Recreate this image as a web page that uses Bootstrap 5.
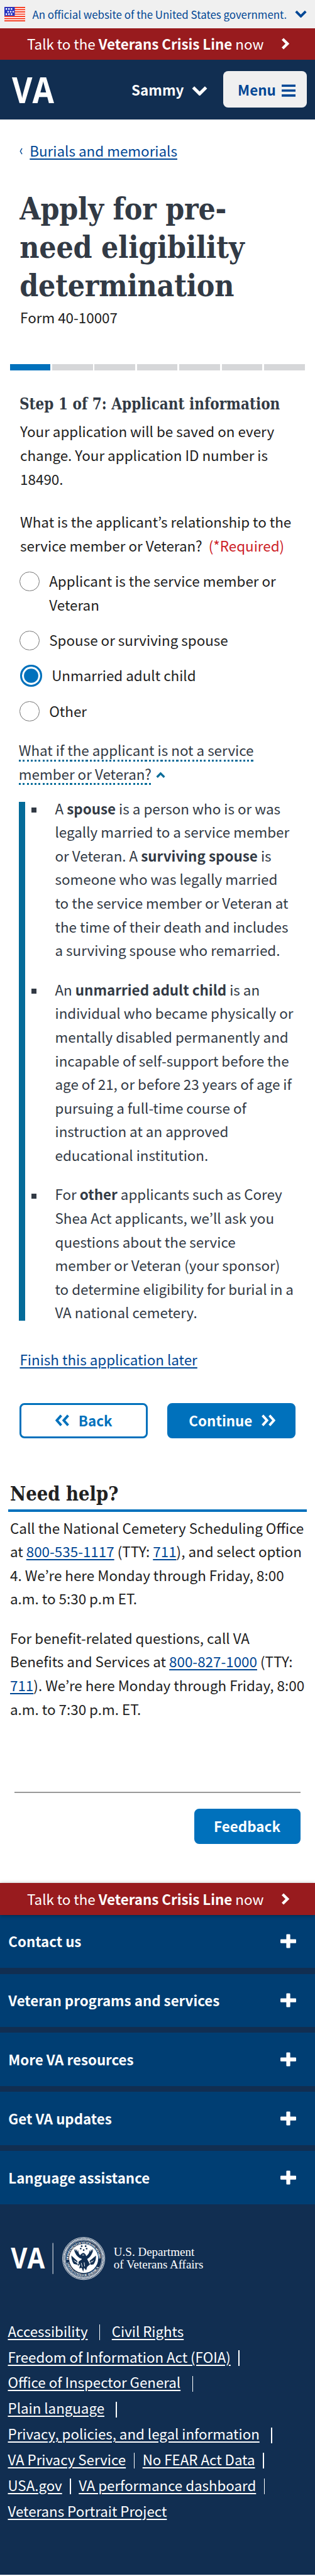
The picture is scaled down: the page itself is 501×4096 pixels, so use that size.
<!DOCTYPE html>
<html lang="en">
<head>
<meta charset="utf-8">
<meta name="viewport" content="width=device-width, initial-scale=1">
<title>Apply for pre-need eligibility determination</title>
<link href="https://cdn.jsdelivr.net/npm/bootstrap@5.3.0/dist/css/bootstrap.min.css" rel="stylesheet">
<style>
:root{--u:.78281px;--s:"Noto Sans CJK KR","Open Sans",sans-serif;--b:"DejaVu Serif Condensed","DejaVu Serif",serif}
body{font-family:var(--s);font-size:calc(28.65*var(--u));line-height:calc(48*var(--u));color:#212121;background:#fff;white-space:nowrap;overflow-x:hidden;width:501px}
p,h1,h2,h3,ul{margin:0}
svg{display:block;flex:none}
a{color:#004795;text-underline-offset:calc(3.5*var(--u));text-decoration-thickness:calc(2*var(--u))}
.gov{height:calc(57*var(--u));background:#f0f0f0;color:#004795;font-size:calc(21.55*var(--u));padding:0 calc(16*var(--u)) 0 calc(9.5*var(--u))}
.crisis{height:calc(64*var(--u));background:#981b1e;color:#fff;padding:0 calc(52*var(--u)) 0 calc(55*var(--u));letter-spacing:-.002em}
.navy{background:#112e51;color:#fff}
.mast{height:calc(122*var(--u));padding:0 calc(16*var(--u)) 0 calc(24*var(--u))}
.menu{width:calc(170*var(--u));height:calc(74*var(--u));background:#f0f0f0;color:#004795;border-radius:calc(10*var(--u));padding:0 calc(24*var(--u)) 0 calc(29*var(--u));margin-left:calc(32*var(--u))}
.crumb{padding:calc(39.5*var(--u)) 0 0 calc(40*var(--u))}
.slab{font-family:var(--b);font-stretch:condensed;font-weight:700;color:#323a45;transform-origin:0 0}
h1.slab{font-size:calc(61*var(--u));line-height:calc(78*var(--u));margin:calc(55.5*var(--u)) 0 0 calc(40*var(--u));letter-spacing:-.005em}
.form-no{padding:calc(.5*var(--u)) 0 0 calc(41*var(--u))}
.steps{margin:calc(71.5*var(--u)) calc(21*var(--u)) 0 calc(20*var(--u));height:calc(12*var(--u));gap:calc(3.6*var(--u))}
.steps div{background:#d6d7d9}
.steps div:first-child{background:#0071bc}
h2.slab{font-size:calc(33*var(--u));line-height:calc(48*var(--u));margin:calc(45.5*var(--u)) 0 0 calc(39*var(--u));transform:scaleX(.93)}
.indent{padding-left:calc(41*var(--u))}
.opt{padding-left:calc(40*var(--u));gap:calc(20*var(--u));margin-top:calc(24*var(--u))}
.ring{width:calc(40*var(--u));height:calc(40*var(--u));border:calc(2*var(--u)) solid #757575;border-radius:50%;margin-top:calc(4.5*var(--u));flex:none}
.ring.on{width:calc(44*var(--u));height:calc(44*var(--u));border:calc(4*var(--u)) solid #0071bc;background:#0071bc;box-shadow:inset 0 0 0 calc(4*var(--u)) #fff;margin:calc(2.5*var(--u)) 0 0 calc(1*var(--u))}
.more{color:#323a45;padding-left:calc(38*var(--u));margin-top:calc(31.5*var(--u))}
.more span{display:inline-block;height:calc(47*var(--u));vertical-align:top;background:repeating-linear-gradient(90deg,#046b99 0 3.13px,transparent 3.13px 6.262px) 0 100%/100% 3px no-repeat}
.more div{height:calc(48*var(--u))}
.info{border-left:calc(14*var(--u)) solid #046b99;margin:calc(33*var(--u)) 0 0 calc(38*var(--u));height:calc(1054*var(--u));color:#323a45;padding:0}
.info li{position:relative;list-style:none;margin:0 0 calc(32*var(--u));padding:0 0 0 calc(61*var(--u));top:calc(-10.5*var(--u))}
.info li::before{content:"";position:absolute;left:calc(13*var(--u));top:calc(22.5*var(--u));width:calc(10*var(--u));height:calc(10*var(--u));background:#323a45}
.act{width:calc(260*var(--u));height:calc(72*var(--u));padding:0;border:calc(4*var(--u)) solid #0071bc;border-radius:calc(10*var(--u));font:inherit;font-weight:700;color:#0071bc}
.act.full{background:#0071bc;color:#fff}
.help{margin:calc(91.4*var(--u)) calc(17*var(--u)) 0;border-bottom:calc(6*var(--u)) solid #0071bc}
.help h2.slab{font-size:calc(40.5*var(--u));line-height:calc(42*var(--u));margin:0 0 0 calc(4*var(--u));color:#212121;height:calc(53*var(--u));transform:scaleX(.965)}
.rule{margin:calc(143.5*var(--u)) calc(30*var(--u)) 0;height:2px;background:#999}
.shade{box-shadow:0 1px 6px rgba(0,0,0,.35);position:relative}
.acc{height:calc(108*var(--u));background:#003e73;margin-bottom:calc(12*var(--u));padding:0 calc(38*var(--u)) 0 calc(17*var(--u));font-weight:700;font-size:calc(28.5*var(--u))}
.foot a{color:#fff}
.foot{padding-left:calc(16*var(--u));font-size:calc(28.5*var(--u));line-height:calc(52.2*var(--u));height:calc(522*var(--u))}
.foot i{display:inline-block;width:1.5px;height:calc(32*var(--u));background:#fff;vertical-align:calc(-7*var(--u));margin:0 calc(16*var(--u))}
.foot .w{margin:0 calc(23.5*var(--u))}
</style>
</head>
<body>
<svg width="0" height="0" class="position-absolute">
  <symbol id="right" viewBox="0 0 16 24"><path d="M3 2.5 12.5 12 3 21.5" fill="none" stroke="currentColor" stroke-width="5.5"/></symbol>
  <symbol id="down" viewBox="0 0 32 20"><path d="M3 3.5 16 16.5 29 3.5" fill="none" stroke="currentColor" stroke-width="6.5"/></symbol>
  <symbol id="dbl" viewBox="0 0 28 24"><path d="M2 2 11 12 2 22M16 2 25 12 16 22" fill="none" stroke="currentColor" stroke-width="5"/></symbol>
  <symbol id="plus" viewBox="0 0 32 32"><path d="M13.500 3.500h5v10h12v5h-12v10h-5v-10h-12v-5h12z" fill="#fff" stroke="#fff" stroke-width="3" stroke-linejoin="round"/></symbol>
</svg>

<div class="gov d-flex align-items-center">
  <svg width="33" height="23" viewBox="0 0 42 29"><path fill="#fff" d="M0 0h42v29H0z"/><path d="M0 1h42M0 5.500h42M0 10h42M0 14.500h42M0 19h42M0 23.500h42M0 28h42" stroke="#f52a0c" stroke-width="2.200"/><path fill="#2434c2" d="M0 0h21v18H0z"/><path d="M2.500 4h14M6 9.500h14M2.500 14.500h14" stroke="#fff" stroke-width="3" stroke-dasharray="3 2.200"/></svg>
  <span style="margin-left:11px">An official website of the United States government.</span>
  <svg class="ms-auto" width="19" height="12"><use href="#down"/></svg>
</div>
<div class="crisis d-flex align-items-center justify-content-between"><span>Talk to the <b>Veterans Crisis Line</b> now</span><svg width="13" height="19"><use href="#right"/></svg></div>
<header class="navy mast d-flex align-items-center">
  <svg width="67" height="41" viewBox="0 0 85 52" overflow="visible" style="margin-top:2px"><text x="0" y="52" font-family="Open Sans" font-weight="700" font-size="72.800" textLength="85" lengthAdjust="spacingAndGlyphs" fill="#fff">VA</text></svg>
  <b class="ms-auto">Sammy</b>
  <svg style="margin:4px 0 0 13px" width="25" height="16"><use href="#down"/></svg>
  <div class="menu d-flex align-items-center justify-content-between"><b>Menu</b><svg width="22" height="20" viewBox="0 0 28 25" style="margin-top:3px"><path d="M0 2.500h28M0 12.500h28M0 22.500h28" stroke="#004795" stroke-width="4.500"/></svg></div>
</header>

<main>
  <div class="crumb d-flex align-items-center"><svg width="5" height="11" viewBox="0 0 6 14" style="margin:2px 11px 0 0"><path d="M5 1 1.500 7 5 13" fill="none" stroke="#004795" stroke-width="1.800"/></svg><a href="#">Burials and memorials</a></div>
  <h1 class="slab">Apply for pre-<br>need eligibility<br>determination</h1>
  <p class="form-no">Form 40-10007</p>
  <div class="steps d-flex"><div class="flex-fill"></div><div class="flex-fill"></div><div class="flex-fill"></div><div class="flex-fill"></div><div class="flex-fill"></div><div class="flex-fill"></div><div class="flex-fill"></div></div>
  <h2 class="slab">Step 1 of 7: Applicant information</h2>
  <p class="indent" style="margin-top:5.600px">Your application will be saved on every<br>change. Your application ID number is<br>18490.</p>
  <p class="indent" style="margin-top:31px">What is the applicant’s relationship to the<br>service member or Veteran?&nbsp; <span style="color:#cd2026">(*Required)</span></p>
  <div class="opt d-flex"><span class="ring"></span><span>Applicant is the service member or<br>Veteran</span></div>
  <div class="opt d-flex"><span class="ring"></span><span>Spouse or surviving spouse</span></div>
  <div class="opt d-flex"><span class="ring on"></span><span>Unmarried adult child</span></div>
  <div class="opt d-flex"><span class="ring"></span><span>Other</span></div>
  <div class="more"><div><span>What if the applicant is not a service</span></div><div class="d-flex"><span>member or Veteran?</span><svg width="15" height="10" viewBox="0 0 18 12" style="margin:15px 0 0 7px"><path d="M2 10.500 9 3.500 16 10.500" fill="none" stroke="#046b99" stroke-width="4"/></svg></div></div>
  <ul class="info">
    <li>A <b>spouse</b> is a person who is or was<br>legally married to a service member<br>or Veteran. A <b>surviving spouse</b> is<br>someone who was legally married<br>to the service member or Veteran at<br>the time of their death and includes<br>a surviving spouse who remarried.</li>
    <li>An <b>unmarried adult child</b> is an<br>individual who became physically or<br>mentally disabled permanently and<br>incapable of self-support before the<br>age of 21, or before 23 years of age if<br>pursuing a full-time course of<br>instruction at an approved<br>educational institution.</li>
    <li>For <b>other</b> applicants such as Corey<br>Shea Act applicants, we’ll ask you<br>questions about the service<br>member or Veteran (your sponsor)<br>to determine eligibility for burial in a<br>VA national cemetery.</li>
  </ul>
  <p style="margin:42.600px 0 0 31.500px"><a href="#">Finish this application later</a></p>
  <div class="d-flex" style="margin:50.500px 0 0 31.300px;gap:31.300px">
    <button class="act btn d-flex align-items-center justify-content-center"><svg width="22" height="19" style="transform:scaleX(-1);margin-right:15px"><use href="#dbl"/></svg>Back</button>
    <button class="act full btn d-flex align-items-center justify-content-center"><span style="margin-left:3px">Continue</span><svg width="22" height="19" style="margin-left:15px"><use href="#dbl"/></svg></button>
  </div>
  <div class="help"><h2 class="slab">Need help?</h2></div>
  <p style="margin:6.500px 0 0 16px">Call the National Cemetery Scheduling Office<br>at <a href="#">800-535-1117</a> (TTY: <a href="#">711</a>), and select option<br>4. We’re here Monday through Friday, 8:00<br>a.m. to 5:30 p.m ET.</p>
  <p style="margin:25px 0 0 16px">For benefit-related questions, call VA<br>Benefits and Services at <a href="#">800-827-1000</a> (TTY:<br><a href="#">711</a>). We’re here Monday through Friday, 8:00<br>a.m. to 7:30 p.m. ET.</p>
  <div class="rule"></div>
  <div class="d-flex justify-content-end" style="margin:25px 23.500px 62.600px 0"><button class="act full btn" style="width:169px">Feedback</button></div>
</main>

<footer class="navy">
  <div class="crisis shade d-flex align-items-center justify-content-between"><span>Talk to the <b>Veterans Crisis Line</b> now</span><svg width="13" height="19"><use href="#right"/></svg></div>
  <div class="acc d-flex align-items-center justify-content-between">Contact us<svg width="25" height="25"><use href="#plus"/></svg></div>
  <div class="acc d-flex align-items-center justify-content-between">Veteran programs and services<svg width="25" height="25"><use href="#plus"/></svg></div>
  <div class="acc d-flex align-items-center justify-content-between">More VA resources<svg width="25" height="25"><use href="#plus"/></svg></div>
  <div class="acc d-flex align-items-center justify-content-between">Get VA updates<svg width="25" height="25"><use href="#plus"/></svg></div>
  <div class="acc d-flex align-items-center justify-content-between">Language assistance<svg width="25" height="25"><use href="#plus"/></svg></div>
  <svg width="501" height="171.500" viewBox="0 4490 640 219" fill="#fff">
    <text x="22" y="4608.500" font-family="Open Sans" font-weight="700" font-size="60" textLength="69" lengthAdjust="spacingAndGlyphs">VA</text>
    <path d="M107.500 4557v63" stroke="#fff" stroke-width="1.200"/>
    <g transform="translate(170 4588.500)">
      <circle r="43" fill="none" stroke="#fff" stroke-width="1"/>
      <circle r="39.800" fill="none" stroke="#fff" stroke-width="3.600" stroke-dasharray="1.900 .9"/>
      <circle r="37" fill="none" stroke="#fff" stroke-width=".8"/>
      <path id="arcT" d="M-30.500 3A30.600 30.600 0 1 1 30.500 3" fill="none"/><path id="arcB" d="M-34.500 9A35.600 35.600 0 0 0 34.500 9" fill="none"/>
      <g font-family="Liberation Serif" font-weight="700" font-size="6.500"><text><textPath href="#arcT" textLength="98">DEPARTMENT OF VETERANS AFFAIRS</textPath></text><text><textPath href="#arcB" textLength="84">UNITED STATES OF AMERICA</textPath></text></g>
      <circle r="29.500"/>
      <g fill="#112e51">
        <path d="M-20-20C-18-10-13-3-6 0L-3-4C-8-6-11-10-11-17L-13-13-14-19-16-15-17-20-18-16ZM20-20C18-10 14-3 7 1L3-3C9-7 12-11 12-17L14-13 15-19 17-15 18-20 19-16Z"/>
        <path d="M-5-9Q0-14 4-8L8 3 13 12 7 17 5 24 1 19-1 27-4 19-9 20-7 12-12 15-10 6-4 2-6-3-10-4Z"/>
        <path d="M-25-6-13 5-12 13-20 11A28 28 0 0 1-25-6M25-6 12 5 14 13 20 12A28 28 0 0 0 25-6"/>
        <circle cx="-4" cy="-25" r="1.800"/><circle cx="4" cy="-25" r="1.800"/><circle cx="-6" cy="-20" r="1.700"/><circle cx="6" cy="-20" r="1.700"/><circle cx="0" cy="-17" r="1.700"/>
      </g>
      <path d="M-14 7-9 12M-17 5-12 11M17 5 11 10M-5 9-3 17M1 8 2 16M-3-7 1-7M-20 4-16 7M20 4 16 8" stroke="#fff" stroke-width="1.200"/>
    </g>
    <g font-family="Liberation Serif" font-size="25"><text x="231" y="4583" textLength="164" lengthAdjust="spacingAndGlyphs">U.S. Department</text><text x="231" y="4608.500" textLength="182" lengthAdjust="spacingAndGlyphs">of Veterans Affairs</text></g>
  </svg>
  <div class="foot">
    <div><a href="#">Accessibility</a><i class="w"></i><a href="#">Civil Rights</a></div>
    <div><a href="#">Freedom of Information Act (FOIA)</a><i></i></div>
    <div><a href="#">Office of Inspector General</a><i class="w"></i></div>
    <div><a href="#">Plain language</a><i class="w"></i></div>
    <div><a href="#">Privacy, policies, and legal information</a><i class="w"></i></div>
    <div><a href="#">VA Privacy Service</a><i></i><a href="#">No FEAR Act Data</a><i></i></div>
    <div><a href="#">USA.gov</a><i></i><a href="#">VA performance dashboard</a><i></i></div>
    <div><a href="#">Veterans Portrait Project</a></div>
  </div>
</footer>
<script src="https://cdn.jsdelivr.net/npm/bootstrap@5.3.0/dist/js/bootstrap.bundle.min.js"></script>
</body>
</html>
